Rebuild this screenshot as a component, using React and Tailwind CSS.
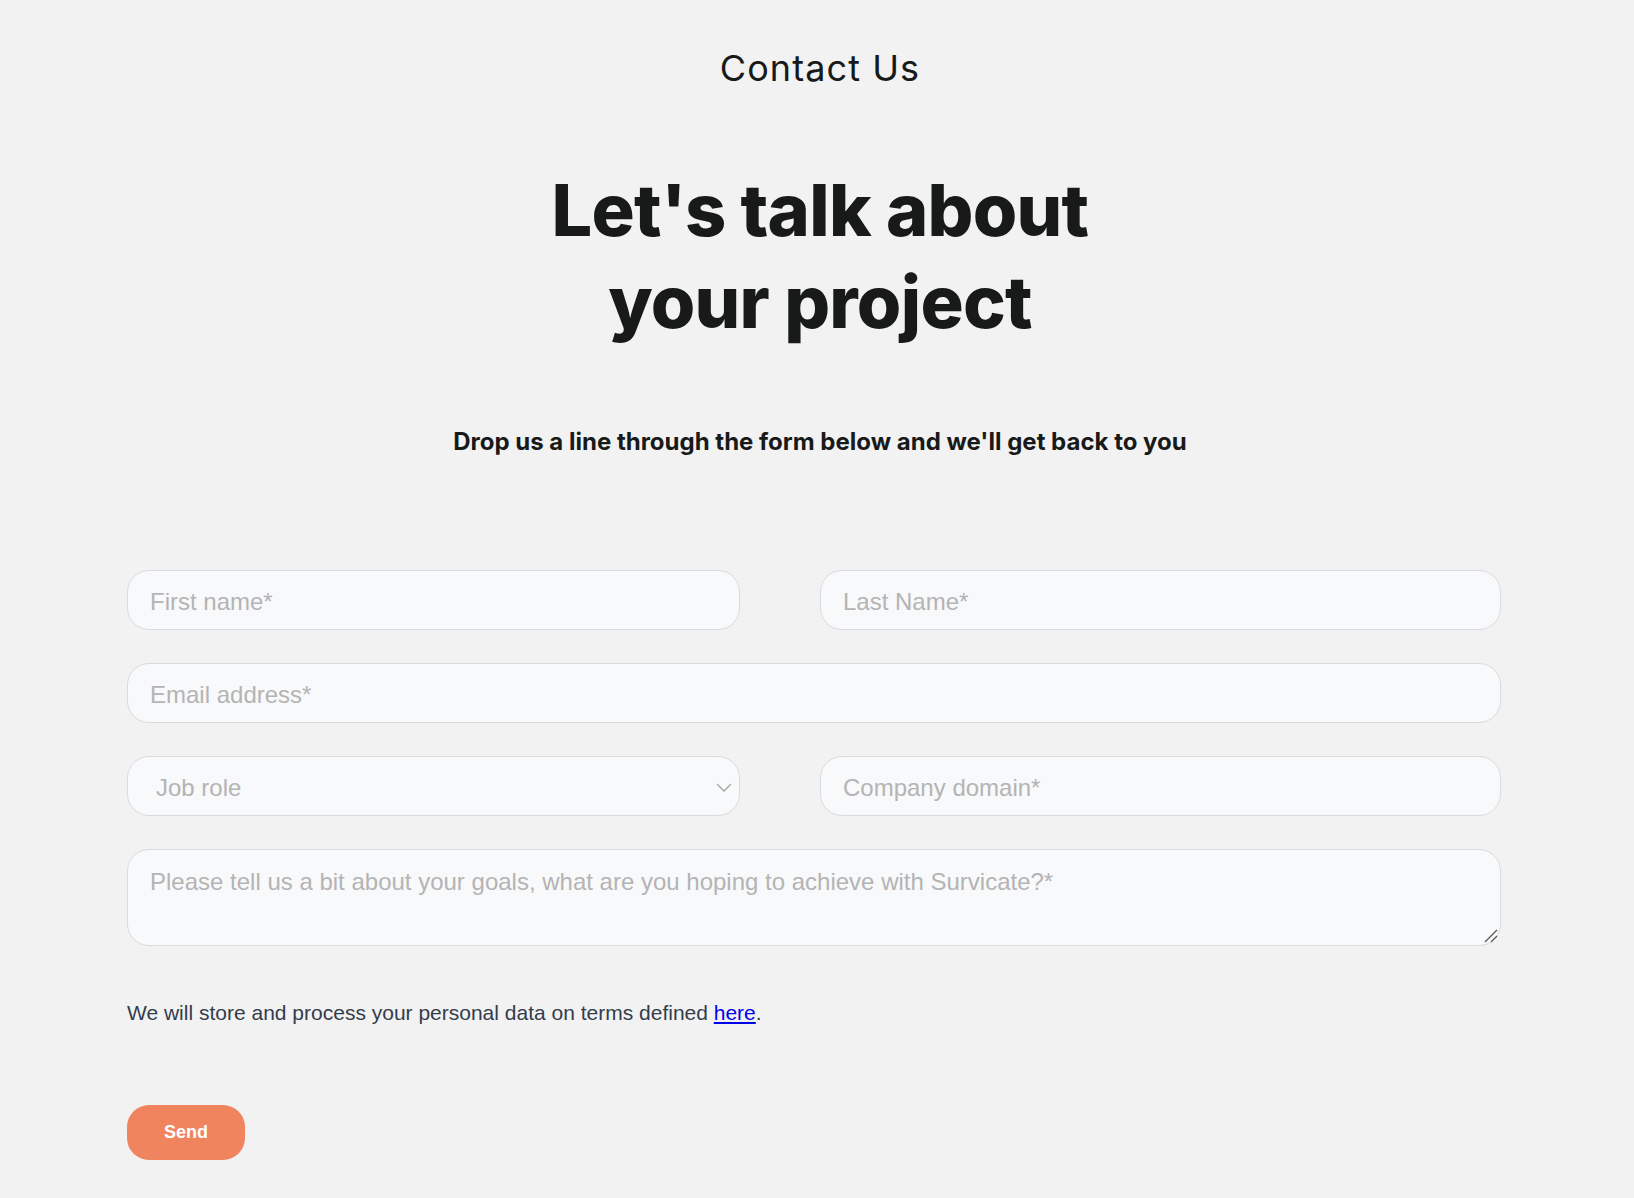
import React from "react";

const inputCls =
  "w-full h-[60px] rounded-[22px] border border-[#d9dbde] bg-[#f8f9fa] px-[22px] pt-[4px] text-[24px] text-[#333] placeholder:text-[#b4b4b4] outline-none";

export default function App() {
  return (
    <div
      className="min-h-screen bg-[#f2f2f2] text-[#181a19]"
      style={{ fontFamily: "Inter, 'Noto Sans', sans-serif" }}
    >
      {/* header */}
      <div className="pt-[46px] pl-[6px] text-center">
        <p className="text-[36px] leading-[44px] tracking-[0.03em]">Contact Us</p>

        <h1 className="mt-[74px] text-[72px] leading-[92px] font-extrabold tracking-[-0.01em]">
          Let's talk about
          <br />
          your project
        </h1>

        <p className="mt-[79px] text-[24px] leading-[30px] font-bold">
          Drop us a line through the form below and we'll get back to you
        </p>
      </div>

      {/* form */}
      <form
        className="w-[1374px] ml-[127px] mt-[113px] pb-[38px]"
        style={{ fontFamily: "'Liberation Sans', Arial, sans-serif" }}
        onSubmit={(e) => e.preventDefault()}
      >
        <div className="grid grid-cols-[613px_1fr] gap-x-[80px] gap-y-[33px]">
          <input className={inputCls} placeholder="First name*" />
          <input className={inputCls} placeholder="Last Name*" />

          <input className={`${inputCls} col-span-2`} placeholder="Email address*" />

          <div className="relative">
            <select
              defaultValue=""
              className="w-full h-[60px] appearance-none rounded-[22px] border border-[#d9dbde] bg-[#f8f9fa] pl-[28px] pr-[40px] pt-[4px] text-[24px] text-[#b4b4b4] outline-none"
            >
              <option value="" disabled>
                Job role
              </option>
              <option>Product Manager</option>
              <option>Marketing</option>
              <option>Research</option>
              <option>Other</option>
            </select>
            <svg
              className="absolute right-[8px] top-[27px] pointer-events-none"
              width="16"
              height="9"
              viewBox="0 0 16 9"
              fill="none"
            >
              <path d="M1 1l7 7 7-7" stroke="#a3a3a3" strokeWidth="1.4" />
            </svg>
          </div>
          <input className={inputCls} placeholder="Company domain*" />

          <div className="relative col-span-2">
            <textarea
              className="block w-full h-[97px] resize-none rounded-[22px] border border-[#d9dbde] bg-[#f8f9fa] px-[22px] pt-[18px] pb-[14px] text-[24px] leading-[28px] placeholder:text-[#b4b4b4] outline-none"
              placeholder="Please tell us a bit about your goals, what are you hoping to achieve with Survicate?*"
            />
            {/* resize grip */}
            <svg
              className="absolute right-[2px] bottom-[2px] pointer-events-none"
              width="16"
              height="16"
              viewBox="0 0 16 16"
              fill="none"
            >
              <path d="M2 14L14 2M8 14l6-6" stroke="#555" strokeWidth="1.3" />
            </svg>
          </div>
        </div>

        <p className="mt-[53px] text-[21px] leading-[28px] text-[#343d4b]">
          We will store and process your personal data on terms defined{" "}
          <a href="#" className="text-[#0000ee] underline">
            here
          </a>
          .
        </p>

        <button
          type="submit"
          className="mt-[78px] h-[55px] w-[118px] rounded-[22px] bg-[#f0845f] text-white text-[18px] font-bold"
        >
          Send
        </button>
      </form>
    </div>
  );
}
